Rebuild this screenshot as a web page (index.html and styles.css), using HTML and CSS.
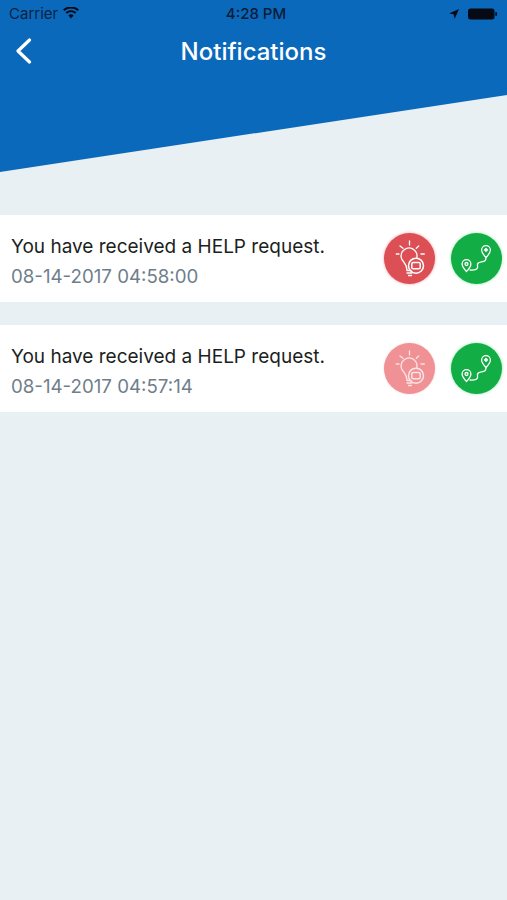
FILE: index.html
```html
<!DOCTYPE html>
<html lang="en">
<head>
<meta charset="utf-8">
<title>Notifications</title>
<link rel="stylesheet" href="styles.css">
</head>
<body>
<div class="screen">
  <header class="header">
    <div class="status">
      <div class="status-side">
        <span>Carrier</span>
        <svg class="wifi" width="16" height="12" viewBox="0 0 16 12"><path d="M8 11.5 5.400 8.400a4 4 0 0 1 5.200 0zM3.900 6.800l-1.300-1.500a8.300 8.300 0 0 1 10.800 0l-1.300 1.500a6.300 6.300 0 0 0-8.200 0zM1.400 3.900 0 2.400a12.300 12.300 0 0 1 16 0l-1.400 1.500a10.300 10.300 0 0 0-13.200 0z"/></svg>
      </div>
      <span class="clock">4:28 PM</span>
      <div class="status-side status-right">
        <svg width="10" height="10" viewBox="0 0 10 10"><path d="M10 0 0 4.400l4.600.9L5.600 10z"/></svg>
        <svg width="30" height="12" viewBox="0 0 30 12"><rect x="0" y="0.5" width="26.500" height="11" rx="2.500"/><rect x="27.300" y="4" width="1.700" height="4" rx="0.800"/></svg>
      </div>
    </div>
    <div class="nav">
      <svg class="back" width="17" height="26" viewBox="0 0 17 26"><path d="M14.500 2 3 13l11.500 11" fill="none" stroke="#fff" stroke-width="3.200" stroke-linecap="round" stroke-linejoin="round"/></svg>
      <h1 class="title">Notifications</h1>
    </div>
  </header>
  <main class="list">
    <article class="card">
      <div class="text">
        <p class="message">You have received a HELP request.</p>
        <p class="date">08-14-2017 04:58:00</p>
      </div>
      <div class="actions">
        <span class="btn btn-red">
          <svg width="52" height="52" viewBox="0 0 52 52" class="ico"><use href="#bulb"/></svg>
        </span>
        <span class="btn btn-green">
          <svg width="52" height="52" viewBox="0 0 52 52" class="ico"><use href="#route"/></svg>
        </span>
      </div>
    </article>
    <article class="card">
      <div class="text">
        <p class="message">You have received a HELP request.</p>
        <p class="date">08-14-2017 04:57:14</p>
      </div>
      <div class="actions">
        <span class="btn btn-pink">
          <svg width="52" height="52" viewBox="0 0 52 52" class="ico ico-faded"><use href="#bulb"/></svg>
        </span>
        <span class="btn btn-green">
          <svg width="52" height="52" viewBox="0 0 52 52" class="ico"><use href="#route"/></svg>
        </span>
      </div>
    </article>
  </main>
</div>
<svg class="defs" width="0" height="0">
  <defs>
    <g id="bulb" fill="none" stroke="#fff" stroke-width="1.300" stroke-linecap="round" stroke-linejoin="round">
      <path d="M23 37c0-3.500-.8-5-3.200-8a8 8 0 1 1 13-4"/>
      <path d="M23 37.500h4M23 40h5M24.500 42.500h3"/>
      <path d="M25.500 8v4M16 13l3 2.300M34.700 13l-2.400 2.300M12.300 21H15M37 21h3.300"/>
      <circle cx="32" cy="32.700" r="7.500" stroke-width="1.500"/>
      <rect x="27.800" y="29.600" width="8.400" height="6.200" rx="1.400" stroke-width="1.500"/>
    </g>
    <g id="route" fill="none" stroke="#fff" stroke-width="1.300" stroke-linecap="round" stroke-linejoin="round">
      <path d="M15.500 38.500c-2.800-3-4.400-5.200-4.400-7.500a4.400 4.400 0 0 1 8.800 0c0 2.300-1.600 4.500-4.400 7.500z"/>
      <circle cx="15.500" cy="31" r="1.500"/>
      <path d="M35 24.500c-2.800-3-4.400-5.200-4.400-7.500a4.400 4.400 0 0 1 8.800 0c0 2.300-1.600 4.500-4.400 7.500z"/>
      <path d="M35 15.400l1.500 1.500-1.500 1.500-1.500-1.500z" fill="#fff"/>
      <path d="M19 37c3 .2 7-.2 7.500-2.300s-.8-3 .5-4.500 5.500-1 7-2.500c.8-.8 1-2 1-3"/>
    </g>
  </defs>
</svg>
</body>
</html>
```
FILE: styles.css
```css
* { box-sizing: border-box; }
html, body { margin: 0; padding: 0; }
body {
  background: #e8f0f3;
  font-family: Inter, "Liberation Sans", sans-serif;
}
.screen { width: 507px; height: 900px; overflow: hidden; }
.header {
  height: 172px;
  background: #0b69bb;
  clip-path: polygon(0 0, 100% 0, 100% 95px, 0 100%);
  padding: 0 9px;
}
.status {
  height: 27px;
  display: grid;
  grid-template-columns: 1fr auto 1fr;
  align-items: center;
  color: #0a2342;
  font-size: 15px;
}
.status-side { display: flex; align-items: center; gap: 5px; }
.status-right { justify-content: flex-end; gap: 9px; }
.status svg { fill: #050a14; display: block; }
.wifi { margin-top: -2px; }
.clock { color: #0a1c38; font-size: 15px; font-weight: 500; padding-left: 5px; }
.nav {
  height: 47px;
  padding-top: 2px;
  display: flex;
  align-items: center;
  justify-content: center;
  position: relative;
}
.back { position: absolute; left: 6px; top: 11px; }
.title {
  margin: 0;
  font-size: 24px;
  font-weight: 500;
  color: #fff;
}
.list {
  padding-top: 43px;
  display: flex;
  flex-direction: column;
  gap: 23px;
}
.card {
  height: 87px;
  background: #fff;
  display: flex;
  align-items: center;
  justify-content: space-between;
  padding: 0 5px 0 11px;
}
.text { padding-top: 7px; }
.message {
  margin: 0 0 6px;
  font-size: 19px;
  line-height: 24px;
  color: #1c1f22;
}
.date {
  margin: 0;
  font-size: 18.700px;
  line-height: 24px;
  color: #6f7e8b;
}
.actions { display: flex; gap: 16px; align-items: center; }
.btn {
  width: 51px;
  height: 51px;
  border-radius: 50%;
  display: flex;
  align-items: center;
  justify-content: center;
}
.ico { display: block; flex: none; }
.ico-faded { opacity: 0.75; }
.btn-red { background: #dc4f55; box-shadow: 0 0 3px rgba(240, 90, 100, 0.6); }
.btn-pink { background: #f09196; box-shadow: 0 0 2px rgba(245, 160, 165, 0.5); }
.btn-green { background: #13ad46; box-shadow: 0 0 3px rgba(60, 220, 110, 0.6); }
.defs { position: absolute; }
```
